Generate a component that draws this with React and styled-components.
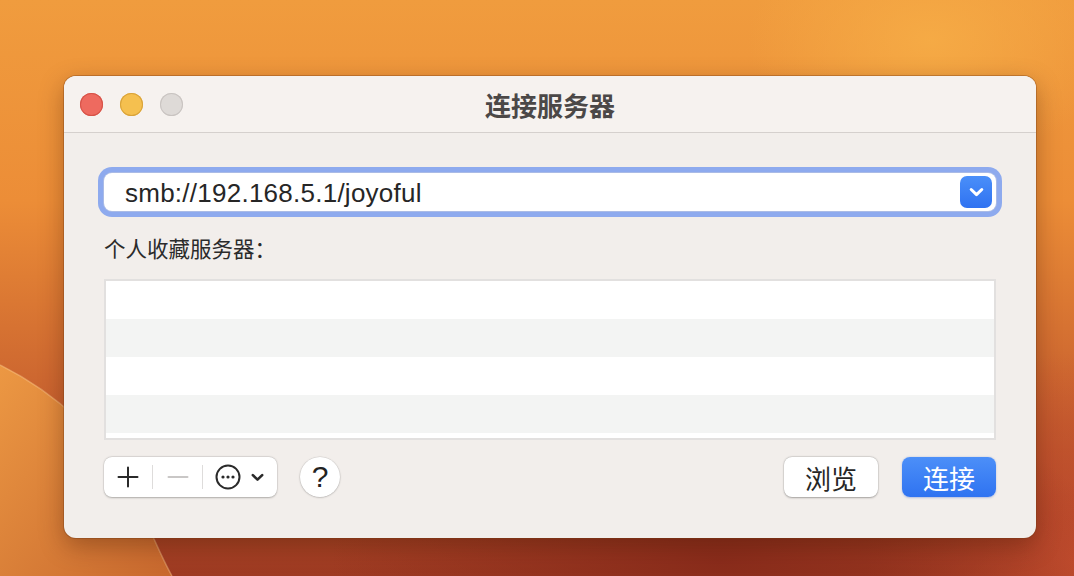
import React from 'react';
import styled, { createGlobalStyle } from 'styled-components';

const GlobalStyle = createGlobalStyle`
  html, body { margin: 0; padding: 0; }
  body {
    font-family: Inter, "Noto Sans CJK SC", "Liberation Sans", sans-serif;
    overflow: hidden;
  }
`;

const Desktop = styled.div`
  position: relative;
  width: 1074px;
  height: 576px;
  padding: 76px 0 0 64px;
  box-sizing: border-box;
  background:
    radial-gradient(ellipse 260px 180px at 930px 40px, rgba(246, 172, 70, 0.9), rgba(246, 172, 70, 0) 70%),
    radial-gradient(ellipse 520px 240px at 720px 560px, #8a2c1b, rgba(138, 44, 27, 0) 75%),
    radial-gradient(ellipse 260px 260px at 1074px 560px, #c24d2e, rgba(194, 77, 46, 0) 80%),
    linear-gradient(180deg, #f09c3e 0%, #ec8d37 35%, #c9622f 70%, #9e3a22 100%);
  overflow: hidden;
`;

const Wallpaper = styled.svg`
  position: absolute;
  left: 0;
  top: 0;
  width: 1074px;
  height: 576px;
`;

const Window = styled.div`
  position: relative;
  width: 972px;
  height: 462px;
  background: #f2eeeb;
  border-radius: 12px;
  box-shadow: 0 0 0 1px rgba(120, 60, 20, 0.35), 0 8px 24px rgba(60, 20, 0, 0.35);
  overflow: hidden;
  display: flex;
  flex-direction: column;
`;

const TitleBar = styled.div`
  height: 56px;
  background: #f6f2ef;
  border-bottom: 1px solid #d5d0cd;
  display: flex;
  align-items: center;
  padding-left: 16px;
  position: relative;
`;

const Lights = styled.div`
  display: flex;
  gap: 17px;
`;

const Light = styled.span`
  width: 23px;
  height: 23px;
  border-radius: 50%;
  background: ${p => p.$color};
  box-shadow: inset 0 0 0 1px ${p => p.$ring};
`;

const Title = styled.div`
  position: absolute;
  left: 0;
  right: 0;
  text-align: center;
  font-size: 26px;
  font-weight: 700;
  color: #4b4847;
  font-family: "Noto Sans CJK SC", sans-serif;
`;

const Body = styled.div`
  padding: 34px 40px 0 40px;
  display: flex;
  flex-direction: column;
`;

const Combo = styled.div`
  height: 38px;
  background: #fff;
  border-radius: 8px;
  box-shadow: 0 0 0 1px #aabbe6, 0 0 0 6px #8eaaee;
  margin: 6px 0 0 0;
  display: flex;
  align-items: center;
  padding: 0 4px 0 21px;
`;

const ComboText = styled.div`
  flex: 1;
  font-size: 26px;
  line-height: 30px;
  padding-top: 2px;
  letter-spacing: 0.25px;
  color: #262626;
  font-family: "Liberation Sans", Arial, sans-serif;
`;

const DropButton = styled.div`
  width: 32px;
  height: 32px;
  border-radius: 7px;
  background: linear-gradient(180deg, #4a8ff9, #2f72f1);
  display: flex;
  align-items: center;
  justify-content: center;
`;

const Label = styled.div`
  margin-top: 24px;
  font-size: 21.5px;
  line-height: 26px;
  color: #2b2b2b;
  font-family: "Noto Sans CJK SC", sans-serif;
`;

const List = styled.div`
  margin-top: 18px;
  height: 157px;
  border: 2px solid #e2e0df;
  background: #fff;
  display: flex;
  flex-direction: column;
  overflow: hidden;
`;

const Row = styled.div`
  height: 38px;
  flex: none;
  background: ${p => (p.$alt ? '#f3f4f3' : '#ffffff')};
`;

const Footer = styled.div`
  margin-top: 17px;
  display: flex;
  align-items: center;
`;

const Segmented = styled.div`
  height: 40px;
  width: 173px;
  background: #fff;
  border-radius: 8px;
  box-shadow: 0 0.5px 2px rgba(0, 0, 0, 0.25), 0 0 0 0.5px rgba(0, 0, 0, 0.08);
  display: flex;
  align-items: center;
`;

const SegButton = styled.div`
  width: ${p => p.$w}px;
  height: 100%;
  display: flex;
  align-items: center;
  justify-content: center;
  gap: 9px;
`;

const Divider = styled.span`
  width: 1px;
  height: 24px;
  background: #dedcdb;
`;

const HelpButton = styled.div`
  margin-left: 23px;
  width: 40px;
  height: 40px;
  border-radius: 50%;
  background: #fff;
  box-shadow: 0 0.5px 2px rgba(0, 0, 0, 0.25), 0 0 0 0.5px rgba(0, 0, 0, 0.08);
  display: flex;
  align-items: center;
  justify-content: center;
  font-size: 30px;
  color: #222;
  font-family: "Liberation Sans", Arial, sans-serif;
`;

const Spacer = styled.div`
  flex: 1;
`;

const Button = styled.div`
  width: 94px;
  height: 40px;
  border-radius: 8px;
  margin-left: ${p => p.$gap || 0}px;
  display: flex;
  align-items: center;
  justify-content: center;
  font-size: 26px;
  font-family: "Noto Sans CJK SC", sans-serif;
  color: ${p => (p.$primary ? '#fff' : '#262626')};
  background: ${p => (p.$primary ? 'linear-gradient(180deg, #4c8ff8, #2f73f1)' : '#fff')};
  box-shadow: ${p => (p.$primary
    ? '0 0.5px 2px rgba(30, 80, 200, 0.3)'
    : '0 0.5px 2px rgba(0, 0, 0, 0.3), 0 0 0 0.5px rgba(0, 0, 0, 0.08)')};
`;

const Chevron = ({ color, size }) => (
  <svg width={size} height={size * 0.7} viewBox="0 0 16 11">
    <path d="M3 3.2 L8 8 L13 3.2" fill="none" stroke={color} strokeWidth="2.8" strokeLinecap="round" strokeLinejoin="round" />
  </svg>
);

const rows = [false, true, false, true, false];

export default function App() {
  return (
    <>
      <GlobalStyle />
      <Desktop>
        <Wallpaper viewBox="0 0 1074 576">
          <defs>
            <linearGradient id="fold" x1="0" y1="0" x2="1" y2="1">
              <stop offset="0" stopColor="#ec9843" />
              <stop offset="1" stopColor="#c8682e" />
            </linearGradient>
          </defs>
          <path d="M0 365 C 50 390, 100 430, 135 495 C 148 525, 160 555, 172 576 L 0 576 Z" fill="url(#fold)" />
          <path d="M0 365 C 50 390, 100 430, 135 495 C 148 525, 160 555, 172 576" fill="none" stroke="rgba(255,210,150,0.4)" strokeWidth="1.5" />
        </Wallpaper>
        <Window>
          <TitleBar>
            <Lights>
              <Light $color="#ee6a5f" $ring="#d65348" />
              <Light $color="#f5c04f" $ring="#d9a33a" />
              <Light $color="#dedad7" $ring="#c9c4c1" />
            </Lights>
            <Title>连接服务器</Title>
          </TitleBar>
          <Body>
            <Combo>
              <ComboText>smb://192.168.5.1/joyoful</ComboText>
              <DropButton>
                <Chevron color="#fff" size={17} />
              </DropButton>
            </Combo>
            <Label>个人收藏服务器：</Label>
            <List>
              {rows.map((alt, i) => <Row key={i} $alt={alt} />)}
            </List>
            <Footer>
              <Segmented>
                <SegButton $w={48}>
                  <svg width="22" height="22" viewBox="0 0 22 22">
                    <path d="M11 1.5 V20.5 M1.5 11 H20.5" stroke="#2a2a2a" strokeWidth="2" strokeLinecap="round" />
                  </svg>
                </SegButton>
                <Divider />
                <SegButton $w={49}>
                  <svg width="22" height="22" viewBox="0 0 22 22">
                    <path d="M1.5 11 H20.5" stroke="#c9c7c6" strokeWidth="2" strokeLinecap="round" />
                  </svg>
                </SegButton>
                <Divider />
                <SegButton $w={74}>
                  <svg width="26" height="26" viewBox="0 0 26 26">
                    <circle cx="13" cy="13" r="11.5" fill="none" stroke="#2a2a2a" strokeWidth="2" />
                    <circle cx="8" cy="13" r="1.6" fill="#2a2a2a" />
                    <circle cx="13" cy="13" r="1.6" fill="#2a2a2a" />
                    <circle cx="18" cy="13" r="1.6" fill="#2a2a2a" />
                  </svg>
                  <Chevron color="#2a2a2a" size={15} />
                </SegButton>
              </Segmented>
              <HelpButton>?</HelpButton>
              <Spacer />
              <Button>浏览</Button>
              <Button $primary $gap={24}>连接</Button>
            </Footer>
          </Body>
        </Window>
      </Desktop>
    </>
  );
}
